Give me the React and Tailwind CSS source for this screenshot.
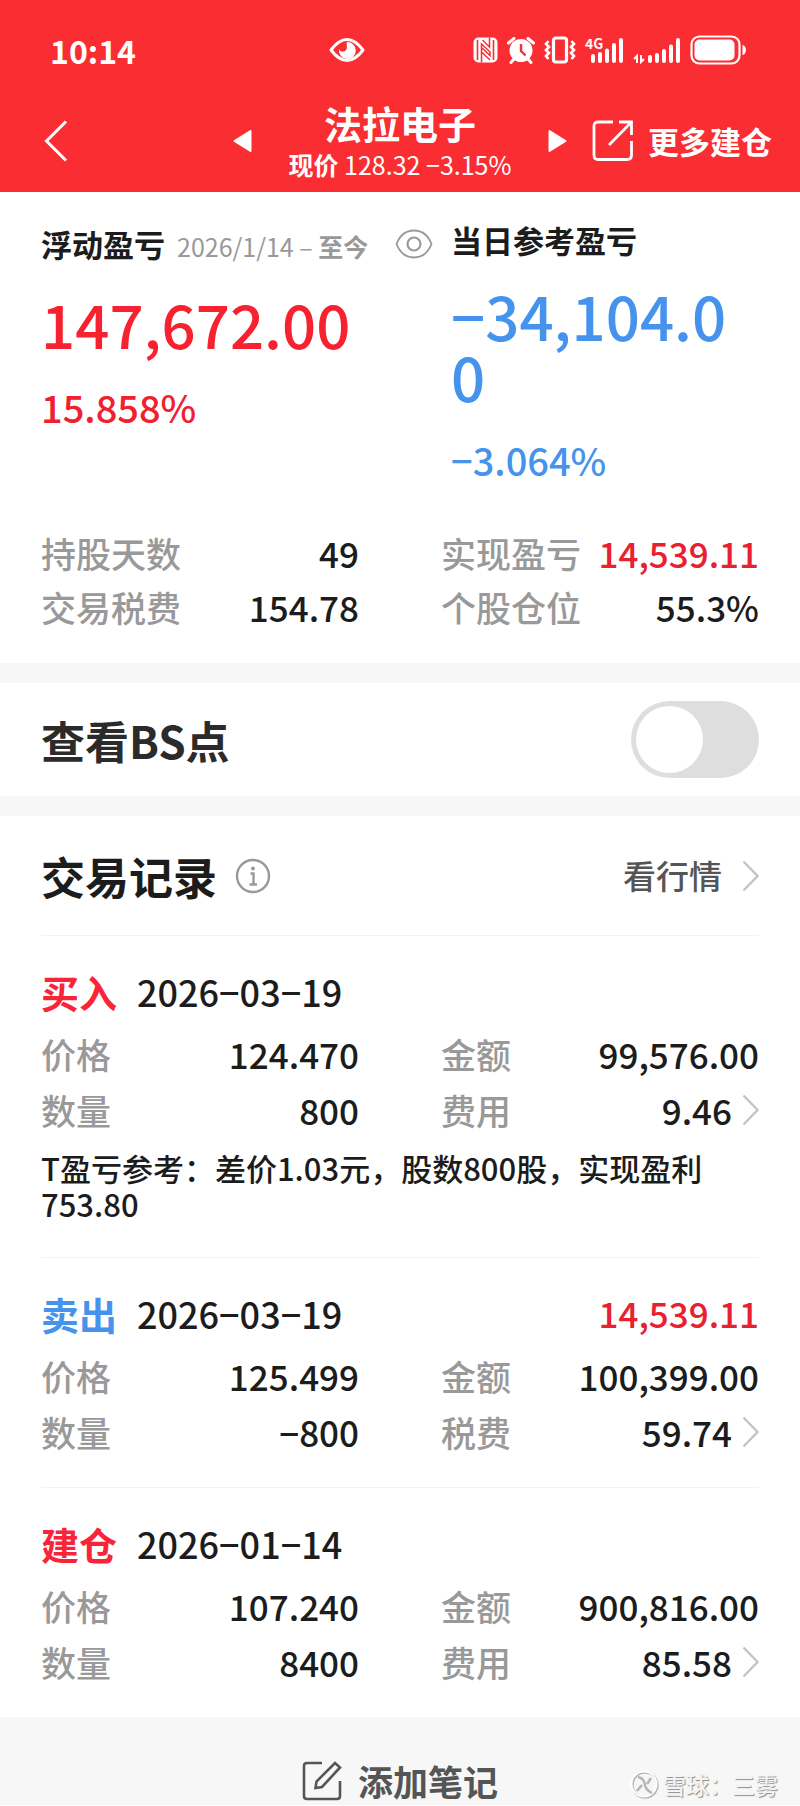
import React, { useState } from 'react';

const records = [
  {
    id: 1,
    type: '买入',
    typeClass: 'text-[#fa2438]',
    date: '2026−03−19',
    price: '124.470',
    amount: '99,576.00',
    count: '800',
    feeLabel: '费用',
    fee: '9.46',
    note: 'T盈亏参考：差价1.03元，股数800股，实现盈利753.80',
  },
  {
    id: 2,
    type: '卖出',
    typeClass: 'text-[#4593ec]',
    date: '2026−03−19',
    profit: '14,539.11',
    price: '125.499',
    amount: '100,399.00',
    count: '−800',
    feeLabel: '税费',
    fee: '59.74',
  },
  {
    id: 3,
    type: '建仓',
    typeClass: 'text-[#fa2438]',
    date: '2026−01−14',
    price: '107.240',
    amount: '900,816.00',
    count: '8400',
    feeLabel: '费用',
    fee: '85.58',
  },
];

const ChevronIcon = () => (
  <svg width="17" height="32" viewBox="0 0 17 32" fill="none" stroke="#c4c4c4" strokeWidth="2.4">
    <path d="M1.5 1.5 L15.5 16 L1.5 30.5" />
  </svg>
);

const StatusBar = () => (
  <div className="grid grid-cols-[40%_auto_1fr] items-center h-[100px] pl-[50px] pr-[53px]">
    <span className="text-[32px] leading-10 font-bold">10:14</span>
    <svg width="36" height="26" viewBox="0 0 36 26" fill="none">
      <path d="M2 13 C8 5 13 2.5 18 2.5 C23 2.5 28 5 34 13 C28 21 23 23.5 18 23.5 C13 23.5 8 21 2 13 Z" stroke="#fff" strokeWidth="3" strokeLinejoin="round" />
      <path d="M18 5 A8.5 8.5 0 1 1 10 12 C11 15 15 15.5 17 13 C19 10 17 8 18 5 Z" fill="#fff" />
    </svg>
    <div className="flex items-center justify-end gap-[9px]">
      {/* NFC */}
      <svg width="25" height="26" viewBox="0 0 25 26" fill="none">
        <rect x="0.5" y="0.5" width="24" height="25" rx="5" fill="#fff" />
        <path d="M4.5 3 V23 M20.5 3 V23" stroke="#fa2d33" strokeWidth="1.6" />
        <path d="M8.5 25.5 V7 L17 15 V18.5 L8.5 10.5 M8.5 15 L17 23 M16.5 0.5 V10 L9.5 3" stroke="#fa2d33" strokeWidth="1.5" />
      </svg>
      {/* Alarm */}
      <svg width="28" height="27" viewBox="0 0 28 27" fill="none">
        <circle cx="14" cy="13.5" r="11.5" fill="#fff" />
        <path d="M1.5 6 L7 1.5 M26.5 6 L21 1.5 M7 22 L4 25.5 M21 22 L24 25.5" stroke="#fff" strokeWidth="3" strokeLinecap="round" />
        <path d="M14 7 V14 L18.5 18.5" stroke="#fa2d33" strokeWidth="2.4" />
      </svg>
      {/* Vibrate */}
      <svg width="32" height="28" viewBox="0 0 32 28" fill="none" stroke="#fff">
        <rect x="9.5" y="2" width="13" height="24" rx="2.5" strokeWidth="3.2" />
        <path d="M4.5 5 L2 8 L5 11 L2 14 L5 17 L2 20 L4.5 23" strokeWidth="2.6" />
        <path d="M27.5 5 L30 8 L27 11 L30 14 L27 17 L30 20 L27.5 23" strokeWidth="2.6" />
      </svg>
      {/* Signal of the first SIM */}
      <svg width="39" height="36" viewBox="0 -4 39 36" className="overflow-visible">
        <text x="0" y="13" fontSize="14" fontWeight="700" fill="#fff">4G</text>
        <g stroke="#fff" strokeWidth="4" strokeLinecap="round">
          <path d="M8 20 V25 M15 18 V25 M22 14.5 V25 M29 9 V25 M36 4 V25" />
        </g>
      </svg>
      {/* Signal of the second SIM */}
      <svg width="48" height="28" viewBox="0 0 48 28" fill="none" stroke="#fff">
        <path d="M4 27 V20 L1 23 M8 19 V26 L11 23" strokeWidth="2" />
        <path d="M17 21 V25 M24 19 V25 M31 15 V25 M38 10.5 V25 M45 4 V25" strokeWidth="4" strokeLinecap="round" />
      </svg>
      {/* Battery */}
      <svg width="57" height="30" viewBox="0 0 57 30" fill="none">
        <rect x="1.5" y="1.5" width="48" height="27" rx="8" stroke="#fff" strokeWidth="2.2" />
        <rect x="4.5" y="4.5" width="40" height="21" rx="5" fill="#fff" />
        <path d="M52.5 10 C57 10.5 57 19.5 52.5 20 Z" fill="#fff" />
      </svg>
    </div>
  </div>
);

const Header = () => (
  <header className="bg-[#fa2d33] text-white">
    <StatusBar />
    <div className="grid grid-cols-[1fr_334px_1fr] items-center h-[92px] px-7 pb-2.5">
      <button type="button" aria-label="返回" className="justify-self-start ml-4">
        <svg width="24" height="42" viewBox="0 0 24 42" fill="none" stroke="#fff" strokeWidth="3">
          <path d="M22 1.5 L2.5 21 L22 40.5" />
        </svg>
      </button>
      <div className="flex items-center justify-between">
        <button type="button" aria-label="上一个">
          <svg width="19" height="24" viewBox="0 0 19 24" fill="#fff" stroke="#fff" strokeWidth="2" strokeLinejoin="round">
            <path d="M1.5 12 L17.5 2 V22 Z" />
          </svg>
        </button>
        <div className="text-center">
          <h1 className="text-[38px] leading-[46px] font-bold">法拉电子</h1>
          <p className="text-[25px] leading-9 whitespace-nowrap">
            <span className="font-bold">现价</span> 128.32 −3.15%
          </p>
        </div>
        <button type="button" aria-label="下一个">
          <svg width="19" height="24" viewBox="0 0 19 24" fill="#fff" stroke="#fff" strokeWidth="2" strokeLinejoin="round">
            <path d="M17.5 12 L1.5 2 V22 Z" />
          </svg>
        </button>
      </div>
      <button type="button" className="flex items-center justify-self-end gap-3.5 whitespace-nowrap">
        <svg width="42" height="42" viewBox="0 0 42 42" fill="none" stroke="#fff" strokeWidth="2.8">
          <path d="M21 2 H6 C3.5 2 2 3.5 2 6 V35 C2 38 3.5 39.5 6 39.5 H35 C38 39.5 39.5 38 39.5 35 V21" />
          <path d="M27 2 H39.5 V15 M39 2.5 L17 25" />
        </svg>
        <span className="text-[31px] font-bold">更多建仓</span>
      </button>
    </div>
  </header>
);

const Field = ({ label, value, valueClass = '', chevron = false }) => (
  <div className="flex items-center justify-between">
    <dt className="text-[#999]">{label}</dt>
    <dd className={`flex items-center gap-2.5 ${valueClass}`}>
      {value}
      {chevron && <ChevronIcon />}
    </dd>
  </div>
);

const Summary = () => (
  <section className="px-[41px] pt-7 pb-[29px]">
    <div className="grid grid-cols-[1fr_308px] gap-[18px] font-medium">
      <div className="pt-1">
        <div className="flex items-center h-10">
          <div className="flex items-baseline gap-3 whitespace-nowrap">
            <h2 className="text-[31px] font-bold">浮动盈亏</h2>
            <p className="text-[25px] font-normal text-[#999]">
              2026/1/14 – <span className="font-bold">至今</span>
            </p>
          </div>
          <button type="button" aria-label="隐藏金额" className="ml-auto">
            <svg width="38" height="30" viewBox="0 0 38 30" fill="none" stroke="#999" strokeWidth="1.8">
              <path d="M1.5 15 C5 6 11 1.5 19 1.5 C27 1.5 33 6 36.5 15 C33 24 27 28.5 19 28.5 C11 28.5 5 24 1.5 15 Z" />
              <circle cx="19" cy="15" r="6.5" strokeWidth="2.2" />
            </svg>
          </button>
        </div>
        <p className="mt-7 text-[60px] leading-[61px] text-[#f8212f]">147,672.00</p>
        <p className="mt-6 text-[38px] leading-[60px] text-[#f0202f]">15.858%</p>
      </div>
      <div className="pr-3">
        <h2 className="flex items-center h-10 text-[31px] font-bold">当日参考盈亏</h2>
        <p className="mt-6 text-[60px] leading-[61px] text-[#4593ec] break-all">−34,104.00</p>
        <p className="mt-6 text-[38px] leading-[60px] text-[#4593ec]">−3.064%</p>
      </div>
    </div>
    <dl className="mt-9 grid grid-cols-2 gap-x-[82px] text-[35px] leading-[54px] font-medium">
      <Field label="持股天数" value="49" />
      <Field label="实现盈亏" value="14,539.11" valueClass="text-[#e8202f]" />
      <Field label="交易税费" value="154.78" />
      <Field label="个股仓位" value="55.3%" />
    </dl>
  </section>
);

const TradeRecord = ({ record }) => (
  <article className="border-t border-[#f2f2f2] pt-[26px] pb-[27px] font-medium">
    <div className="flex items-center h-[58px] text-[36px]">
      <h3 className={`text-[38px] font-bold ${record.typeClass}`}>{record.type}</h3>
      <span className="ml-5">{record.date}</span>
      {record.profit && <span className="ml-auto text-[35px] text-[#e8202f]">{record.profit}</span>}
    </div>
    <dl className="mt-1.5 grid grid-cols-2 gap-x-[82px] text-[35px] leading-[56px]">
      <Field label="价格" value={record.price} />
      <Field label="金额" value={record.amount} />
      <Field label="数量" value={record.count} />
      <Field label={record.feeLabel} value={record.fee} chevron />
    </dl>
    {record.note && <p className="mt-3 mb-2 text-[31px] leading-9 font-medium">{record.note}</p>}
  </article>
);

const App = () => {
  const [showPoints, setShowPoints] = useState(false);

  return (
    <div className="relative min-h-screen bg-white text-[#1c1c1c] font-['Noto_Sans_CJK_SC',sans-serif]">
      <Header />
      <Summary />

      <section className="flex items-center justify-between h-[153px] px-[41px] border-y-20 border-[#f7f7f7]">
        <label htmlFor="bs-points" className="text-[44px] font-bold text-[#2b2b2b]">查看BS点</label>
        <input
          id="bs-points"
          type="checkbox"
          role="switch"
          checked={showPoints}
          onChange={(e) => setShowPoints(e.target.checked)}
          className="appearance-none w-32 h-[77px] rounded-full bg-[#dedede] p-[5px] before:block before:size-[67px] before:rounded-full before:bg-white checked:bg-[#fa2d33] checked:before:ml-auto"
        />
      </section>

      <section className="px-[41px]">
        <div className="flex items-center h-[119px]">
          <h2 className="text-[44px] font-bold">交易记录</h2>
          <button type="button" aria-label="说明" className="ml-[18px]">
            <svg width="36" height="36" viewBox="0 0 36 36" fill="none" stroke="#999" strokeWidth="2.4">
              <circle cx="18" cy="18" r="16" />
              <circle cx="18" cy="10.5" r="2" fill="#999" stroke="none" />
              <path d="M15.5 15.5 H18.5 V26 M14.5 26.5 H22" />
            </svg>
          </button>
          <a href="#quote" className="flex items-center gap-5 ml-auto text-[33px] font-medium text-[#555]">
            看行情
            <ChevronIcon />
          </a>
        </div>
        {records.map((record) => (
          <TradeRecord key={record.id} record={record} />
        ))}
      </section>

      <footer className="flex justify-center bg-[#f7f7f7] pt-10 h-[88px]">
        <button type="button" className="flex items-center gap-4 h-12 text-[35px] font-bold text-[#555]">
          <svg width="40" height="40" viewBox="0 0 40 40" fill="none" stroke="#555" strokeWidth="2.6">
            <path d="M20 2 H5 C3 2 2 3 2 5 V35 C2 37 3 38 5 38 H35 C37 38 38 37 38 35 V20" />
            <path d="M33 2 L38 6.5 L20 26 L13.5 27 L14.5 20.5 Z" />
          </svg>
          添加笔记
        </button>
      </footer>

      {/* Watermark */}
      <div className="absolute right-[22px] bottom-1 flex items-center gap-1 text-[23px] leading-9 font-medium text-[#f4f4f4] [text-shadow:1px_1px_1px_#8c8c8c]">
        <svg width="29" height="29" viewBox="0 0 29 29" fill="none">
          <circle cx="15" cy="15" r="12.5" stroke="#b5b5b5" strokeWidth="2.4" />
          <circle cx="14" cy="14" r="12.5" stroke="#fff" strokeWidth="2" />
          <path d="M8 7 C12 8 14 10 14.5 13 C15 17 17 21 22 23" stroke="#b5b5b5" strokeWidth="2.4" />
          <path d="M21 8 L17 14 M12 15 L7 21" stroke="#b5b5b5" strokeWidth="2.6" />
        </svg>
        雪球：三雾
      </div>
    </div>
  );
};

export default App;
